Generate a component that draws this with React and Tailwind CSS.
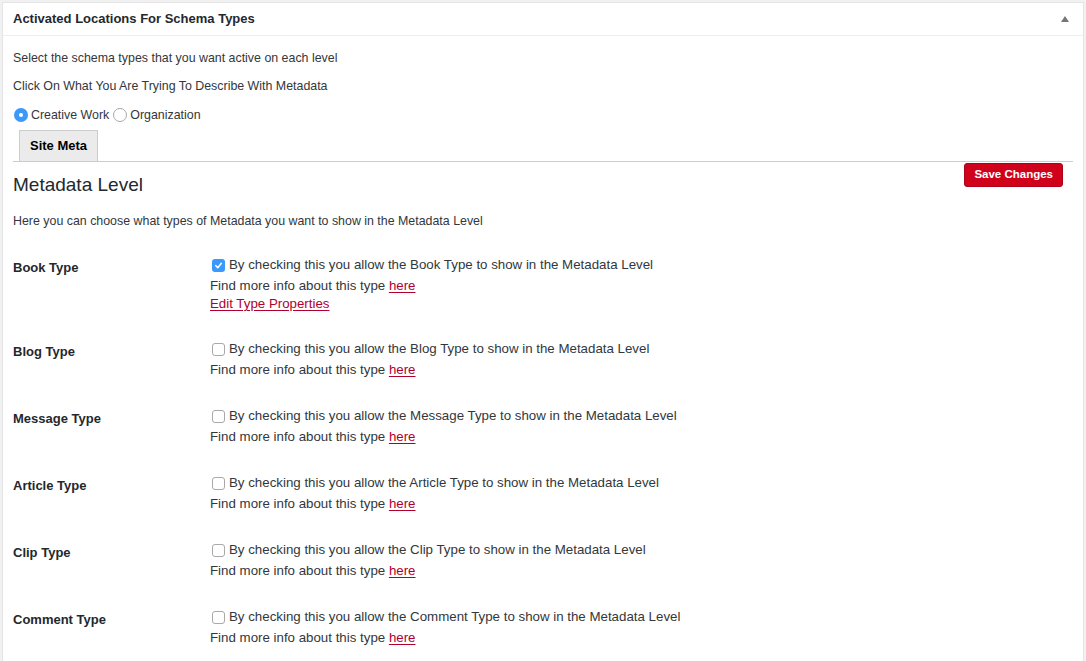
import React from "react";

const types = [
  { name: "Book", checked: true, edit: true },
  { name: "Blog" },
  { name: "Message" },
  { name: "Article" },
  { name: "Clip" },
  { name: "Comment" },
];

function Checkbox({ checked }) {
  if (checked) {
    return (
      <span className="inline-flex items-center justify-center w-[13px] h-[13px] rounded-[3px] bg-[#3b99fc] mr-[4px] shrink-0">
        <svg width="9" height="9" viewBox="0 0 10 10">
          <path d="M2 5.2 L4.2 7.4 L8.2 2.6" fill="none" stroke="#fff" strokeWidth="1.7" strokeLinecap="round" strokeLinejoin="round" />
        </svg>
      </span>
    );
  }
  return (
    <span className="inline-block w-[13px] h-[13px] rounded-[3px] border border-[#a9a9a9] bg-white mr-[4px] shrink-0" />
  );
}

function Row({ t }) {
  return (
    <div className={t.edit ? "flex pt-[13px] pb-[11px]" : "flex pt-[13px] pb-[12px]"}>
      <div className="w-[197px] shrink-0 pt-[6px] font-bold text-[13px] text-[#23282d] leading-[18px]">
        {t.name} Type
      </div>
      <div className="flex flex-col text-[13.3px] text-[#32373c]">
        <div className="h-[24px] flex items-center pl-[2px]">
          <Checkbox checked={t.checked} />
          <span>By checking this you allow the {t.name} Type to show in the Metadata Level</span>
        </div>
        <div className="h-[18px] leading-[18px]">
          Find more info about this type{" "}
          <a className="text-[#b0002b] underline underline-offset-2">here</a>
        </div>
        {t.edit && (
          <div className="h-[18px] leading-[18px]">
            <a className="text-[#b0002b] underline underline-offset-2">Edit Type Properties</a>
          </div>
        )}
      </div>
    </div>
  );
}

export default function App() {
  return (
    <div
      className="min-h-[661px] bg-[#f1f1f1] pt-[2px] pl-[2px] pr-[2px] overflow-hidden"
      style={{ fontFamily: '"Liberation Sans", Arial, sans-serif' }}
    >
      <div className="bg-white border border-[#e5e5e5] min-h-[700px]">
        <div className="h-[33px] flex items-center justify-between px-[10px] border-b border-[#eeeeee]">
          <span className="font-bold text-[13px] text-[#23282d]">Activated Locations For Schema Types</span>
          <svg width="8" height="6" viewBox="0 0 8 6" className="mr-[4px]">
            <path d="M4 0 L8 6 L0 6 Z" fill="#72777c" />
          </svg>
        </div>
        <div className="px-[10px] text-[12.4px] text-[#32373c]">
          <div className="h-[18px] leading-[18px] mt-[13px]">Select the schema types that you want active on each level</div>
          <div className="h-[18px] leading-[18px] mt-[10px]">Click On What You Are Trying To Describe With Metadata</div>
          <div className="h-[18px] mt-[11px] flex items-center">
            <span className="w-[14px] h-[14px] rounded-full bg-[#3b99fc] flex items-center justify-center ml-[1px] mr-[3px]">
              <span className="w-[4px] h-[4px] rounded-full bg-white" />
            </span>
            <span>Creative Work</span>
            <span className="w-[14px] h-[14px] rounded-full border border-[#a9a9a9] bg-white ml-[4px] mr-[3px]" />
            <span>Organization</span>
          </div>
          <div className="mt-[6px] border-b border-[#cccccc] flex pl-[6px]">
            <div className="h-[31px] px-[10px] flex items-center bg-[#ebebeb] border border-b-0 border-[#cccccc] font-bold text-[13px] text-[#000]">
              Site Meta
            </div>
          </div>
          <div className="flex justify-between items-start">
            <div className="text-[19px] text-[#23282d] mt-[11px] leading-[24px]">Metadata Level</div>
            <button className="mt-[1px] mr-[10px] h-[24px] px-[9px] bg-[#d0021b] border border-[#b00017] rounded-[3px] text-white font-bold text-[11.5px]">
              Save Changes
            </button>
          </div>
          <div className="h-[18px] leading-[18px] mt-[15px]">Here you can choose what types of Metadata you want to show in the Metadata Level</div>
          <div className="mt-[10px]">
            {types.map((t) => (
              <Row key={t.name} t={t} />
            ))}
          </div>
        </div>
      </div>
    </div>
  );
}
